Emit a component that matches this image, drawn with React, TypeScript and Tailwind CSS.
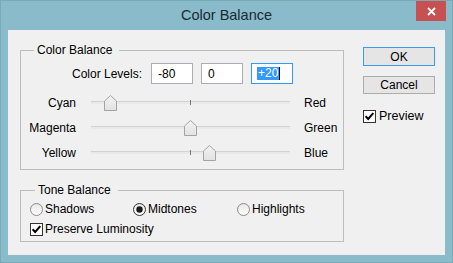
import React from "react";

const font = "font-['Liberation_Sans',Arial,sans-serif]";

function Thumb({ left }: { left: number }) {
  return (
    <svg
      width="13"
      height="16"
      viewBox="0 0 13 16"
      className="absolute top-0"
      style={{ left }}
    >
      <defs>
        <linearGradient id="tg" x1="0" y1="0" x2="0" y2="1">
          <stop offset="0" stopColor="#f2f2f2" />
          <stop offset="1" stopColor="#e2e2e2" />
        </linearGradient>
      </defs>
      <polygon
        points="0.5,15.5 0.5,6 6.5,0.5 12.5,6 12.5,15.5"
        fill="url(#tg)"
        stroke="#a3a3a3"
        strokeWidth="1"
      />
    </svg>
  );
}

function SliderRow({
  left,
  right,
  value,
}: {
  left: string;
  right: string;
  value: number;
}) {
  const center = 99 + (value / 100) * 99;
  return (
    <div className="flex items-center h-[25px]">
      <div className="w-[55px] text-right leading-[14px]">{left}</div>
      <div className="relative ml-[15px] w-[199px] h-[16px]">
        <div className="absolute left-0 right-0 top-[6px] h-[3px] bg-[#e9e9e9] border-t border-[#d2d2d2]" />
        <div className="absolute left-[99px] top-[5px] w-px h-[5px] bg-[#7a7a7a]" />
        <Thumb left={Math.round(center - 6.5)} />
      </div>
      <div className="ml-[14px] leading-[14px]">{right}</div>
    </div>
  );
}

function CheckBox() {
  return (
    <svg width="13" height="13" viewBox="0 0 13 13" className="shrink-0">
      <rect x="0.5" y="0.5" width="12" height="12" fill="#fff" stroke="#333" />
      <path d="M2.6 6.3 L5.2 9 L10.3 3.2" fill="none" stroke="#000" strokeWidth="2" />
    </svg>
  );
}

function Radio({ checked }: { checked?: boolean }) {
  return (
    <svg width="13" height="13" viewBox="0 0 13 13" className="shrink-0">
      <defs>
        <linearGradient id="rg" x1="0" y1="0" x2="0" y2="1">
          <stop offset="0" stopColor="#e6e6e6" />
          <stop offset="1" stopColor="#ffffff" />
        </linearGradient>
      </defs>
      <circle cx="6.5" cy="6.5" r="6" fill="url(#rg)" stroke={checked ? "#333" : "#8a8a8a"} />
      {checked && <circle cx="6.5" cy="6.5" r="3.2" fill="#1a1a1a" />}
    </svg>
  );
}

export default function App() {
  return (
    <div
      className={`relative w-[453px] h-[263px] bg-[#8abbca] flex flex-col border border-[#7aa9b8] text-[12px] text-[#000] ${font}`}
    >
      <div className="h-[29px] flex items-center justify-center text-[14.5px] text-[#1c2a33] pt-[1px]">
        Color Balance
      </div>
      <div className="absolute right-[6px] top-0 w-[30px] h-[20px] bg-[#c75050] flex items-center justify-center">
        <svg width="9" height="9" viewBox="0 0 9 9">
          <path d="M1 1 L8 8 M8 1 L1 8" stroke="#fff" strokeWidth="1.8" />
        </svg>
      </div>
      <div className="mx-[7px] h-[225px] bg-[#f0f0f0] flex">
        <div className="pl-[12px] pt-[20px] flex flex-col gap-[20px]">
          {/* Color Balance group */}
          <div className="relative w-[324px] h-[120px] border border-[#bdbdbd] flex flex-col pt-[12px]">
            <span className="absolute left-[13px] top-[-8px] leading-[14px] bg-[#f0f0f0] pl-[3px] pr-[7px]">
              Color Balance
            </span>
            <div className="flex items-center h-[21px]">
              <div className="w-[121px] text-right leading-[14px]">Color Levels:</div>
              <div className="ml-[9px] flex gap-[8px]">
                <div className="w-[42px] h-[21px] bg-white border border-[#abadb3] pl-[6px] flex items-center leading-[14px]">
                  -80
                </div>
                <div className="w-[42px] h-[21px] bg-white border border-[#abadb3] pl-[6px] flex items-center leading-[14px]">
                  0
                </div>
                <div className="w-[42px] h-[21px] bg-white border border-[#3399ff] pl-[5px] flex items-center leading-[14px]">
                  <span className="bg-[#3399ff] text-white px-px leading-[13px]">+20</span>
                  <span className="w-px h-[13px] bg-black" />
                </div>
              </div>
            </div>
            <div className="mt-[6px] flex flex-col">
              <SliderRow left="Cyan" right="Red" value={-80} />
              <SliderRow left="Magenta" right="Green" value={0} />
              <SliderRow left="Yellow" right="Blue" value={20} />
            </div>
          </div>
          {/* Tone Balance group */}
          <div className="relative w-[324px] h-[52px] border border-[#bdbdbd] flex flex-col pt-[11px] pl-[9px]">
            <span className="absolute left-[14px] top-[-8px] leading-[14px] bg-[#f0f0f0] pl-[3px] pr-[7px]">
              Tone Balance
            </span>
            <div className="flex items-center h-[14px]">
              <div className="w-[103px] flex items-center gap-[2px]">
                <Radio />
                <span className="leading-[14px]">Shadows</span>
              </div>
              <div className="w-[104px] flex items-center gap-[2px]">
                <Radio checked />
                <span className="leading-[14px]">Midtones</span>
              </div>
              <div className="flex items-center gap-[2px]">
                <Radio />
                <span className="leading-[14px]">Highlights</span>
              </div>
            </div>
            <div className="mt-[6px] flex items-center gap-[2px] h-[14px]">
              <CheckBox />
              <span className="leading-[14px]">Preserve Luminosity</span>
            </div>
          </div>
        </div>
        <div className="ml-[19px] pt-[17px] flex flex-col">
          <div className="w-[72px] h-[19px] border border-[#3c9af0] bg-[#e5e5e5] flex items-center justify-center leading-[14px]">
            OK
          </div>
          <div className="mt-[10px] w-[72px] h-[18px] border border-[#acacac] bg-[#e5e5e5] flex items-center justify-center leading-[14px]">
            Cancel
          </div>
          <div className="mt-[15px] flex items-center gap-[3px]">
            <CheckBox />
            <span className="leading-[14px] text-[12.5px]">Preview</span>
          </div>
        </div>
      </div>
    </div>
  );
}
